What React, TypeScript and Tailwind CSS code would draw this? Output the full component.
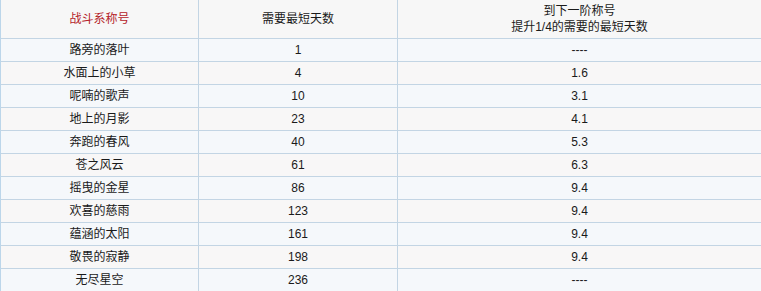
const ROWS: [string, string, string][] = [
  ["路旁的落叶", "1", "----"],
  ["水面上的小草", "4", "1.6"],
  ["呢喃的歌声", "10", "3.1"],
  ["地上的月影", "23", "4.1"],
  ["奔跑的春风", "40", "5.3"],
  ["苍之风云", "61", "6.3"],
  ["摇曳的金星", "86", "9.4"],
  ["欢喜的慈雨", "123", "9.4"],
  ["蕴涵的太阳", "161", "9.4"],
  ["敬畏的寂静", "198", "9.4"],
  ["无尽星空", "236", "----"],
];

const grid = "grid grid-cols-[198px_199px_1fr]";
const cell = "flex items-center justify-center border-b border-[#c3d5e4]";

export default function App() {
  return (
    <div
      className="w-[761px] h-[291px] overflow-hidden bg-white text-[12px] text-[#1a1a1a]"
      style={{ fontFamily: '"Liberation Sans", "Noto Sans CJK SC", sans-serif' }}
    >
      <div className="border-l border-[#bcd6ea]">
        {/* header */}
        <div className={`${grid} h-[39px] bg-[#f7f7f7]`}>
          <div className={`${cell} border-r text-[#b5232a]`}>战斗系称号</div>
          <div className={`${cell} border-r`}>需要最短天数</div>
          <div className={`${cell} flex-col leading-[16px]`}>
            <span>到下一阶称号</span>
            <span>提升1/4的需要的最短天数</span>
          </div>
        </div>

        {ROWS.map(([name, days, next], i) => (
          <div
            key={name}
            className={`${grid} h-[23px] pb-px ${i % 2 === 0 ? "bg-[#f5f8fb]" : "bg-[#f8f7f7]"}`}
          >
            <div className={`${cell} border-r -mb-px`}>{name}</div>
            <div className={`${cell} border-r -mb-px`}>{days}</div>
            <div className={`${cell} -mb-px`}>{next}</div>
          </div>
        ))}
      </div>
    </div>
  );
}
